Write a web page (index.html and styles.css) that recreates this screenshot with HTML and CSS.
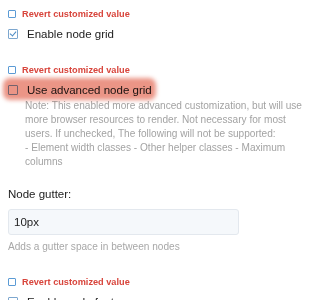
FILE: index.html
```html
<!DOCTYPE html>
<html lang="en">
<head>
    <meta charset="UTF-8">
    <meta name="viewport" content="width=device-width, initial-scale=1.0">
    <title>Node grid settings</title>
    <link rel="stylesheet" href="styles.css">
</head>
<body>
    <div class="settings">
        <!-- Enable node grid -->
        <div class="field">
            <label class="revert"><span class="box"></span>Revert customized value</label>
            <label class="option"><span class="check checked"></span>Enable node grid</label>
        </div>

        <!-- Advanced node grid -->
        <div class="field">
            <label class="revert"><span class="box"></span>Revert customized value</label>
            <label class="option marked"><span class="check"></span>Use advanced node grid</label>
            <p class="note">Note: This enabled more advanced customization, but will use more browser resources to render. Not necessary for most users. If unchecked, The following will not be supported:<br>- Element width classes - Other helper classes - Maximum columns</p>
        </div>

        <!-- Node gutter -->
        <div class="field gutter">
            <label class="label" for="gutter">Node gutter:</label>
            <input type="text" id="gutter" class="text-input" value="10px">
            <p class="help">Adds a gutter space in between nodes</p>
        </div>

        <!-- Node footer -->
        <div class="field">
            <label class="revert"><span class="box"></span>Revert customized value</label>
            <label class="option"><span class="check"></span>Enable node footer</label>
        </div>
    </div>
</body>
</html>
```

FILE: styles.css
```css
/* Global styles */
body {
    font-family: "Liberation Sans", Arial, sans-serif;
    background-color: #fff;
    color: #222;
    margin: 0;
    padding: 8px 8px 0 8px;
}

.settings {
    display: flex;
    flex-direction: column;
}

.field {
    margin-bottom: 24px;
}

.field.gutter {
    margin-top: -6px;
    margin-bottom: 23px;
}

/* Revert link */
.revert {
    display: flex;
    align-items: center;
    height: 12px;
    font-size: 9.2px;
    font-weight: bold;
    color: #d8453c;
}

.box {
    width: 6px;
    height: 6px;
    border: 1px solid #5b9bd5;
    border-radius: 1px;
    margin-right: 6px;
}

/* Checkbox rows */
.option {
    position: relative;
    display: flex;
    align-items: center;
    height: 12px;
    margin-top: 8px;
    font-size: 11.5px;
    color: #222;
}

.check {
    position: relative;
    width: 8px;
    height: 8px;
    border: 1px solid #7da7cf;
    border-radius: 1px;
    margin-right: 9px;
}

.check.checked::after {
    content: "";
    position: absolute;
    left: 2px;
    top: 0;
    width: 3px;
    height: 5px;
    border-right: 1.2px solid #4a8ac4;
    border-bottom: 1.2px solid #4a8ac4;
    transform: rotate(40deg);
}

/* Highlight over the advanced option */
.option.marked {
    width: fit-content;
}

.option.marked::after {
    content: "";
    position: absolute;
    left: -5px;
    right: -4px;
    top: -6px;
    bottom: -4px;
    background-color: rgba(222, 84, 60, 0.62);
    border-radius: 7px;
    filter: blur(2px);
    mix-blend-mode: multiply;
}

/* Help texts */
.note {
    margin: 3px 0 0 17px;
    font-size: 10.1px;
    line-height: 14px;
    color: #a3a3a3;
}

.label {
    display: block;
    font-size: 11.5px;
    line-height: 14px;
}

.text-input {
    display: block;
    box-sizing: border-box;
    width: 231px;
    height: 26px;
    margin-top: 8px;
    padding: 0 5px;
    font-family: inherit;
    font-size: 11.5px;
    color: #222;
    background-color: #f5f8fb;
    border: 1px solid #e3e8ee;
    border-radius: 3px;
}

.help {
    margin: 6px 0 0 0;
    font-size: 10.1px;
    line-height: 12px;
    color: #a8a8a8;
}
```
